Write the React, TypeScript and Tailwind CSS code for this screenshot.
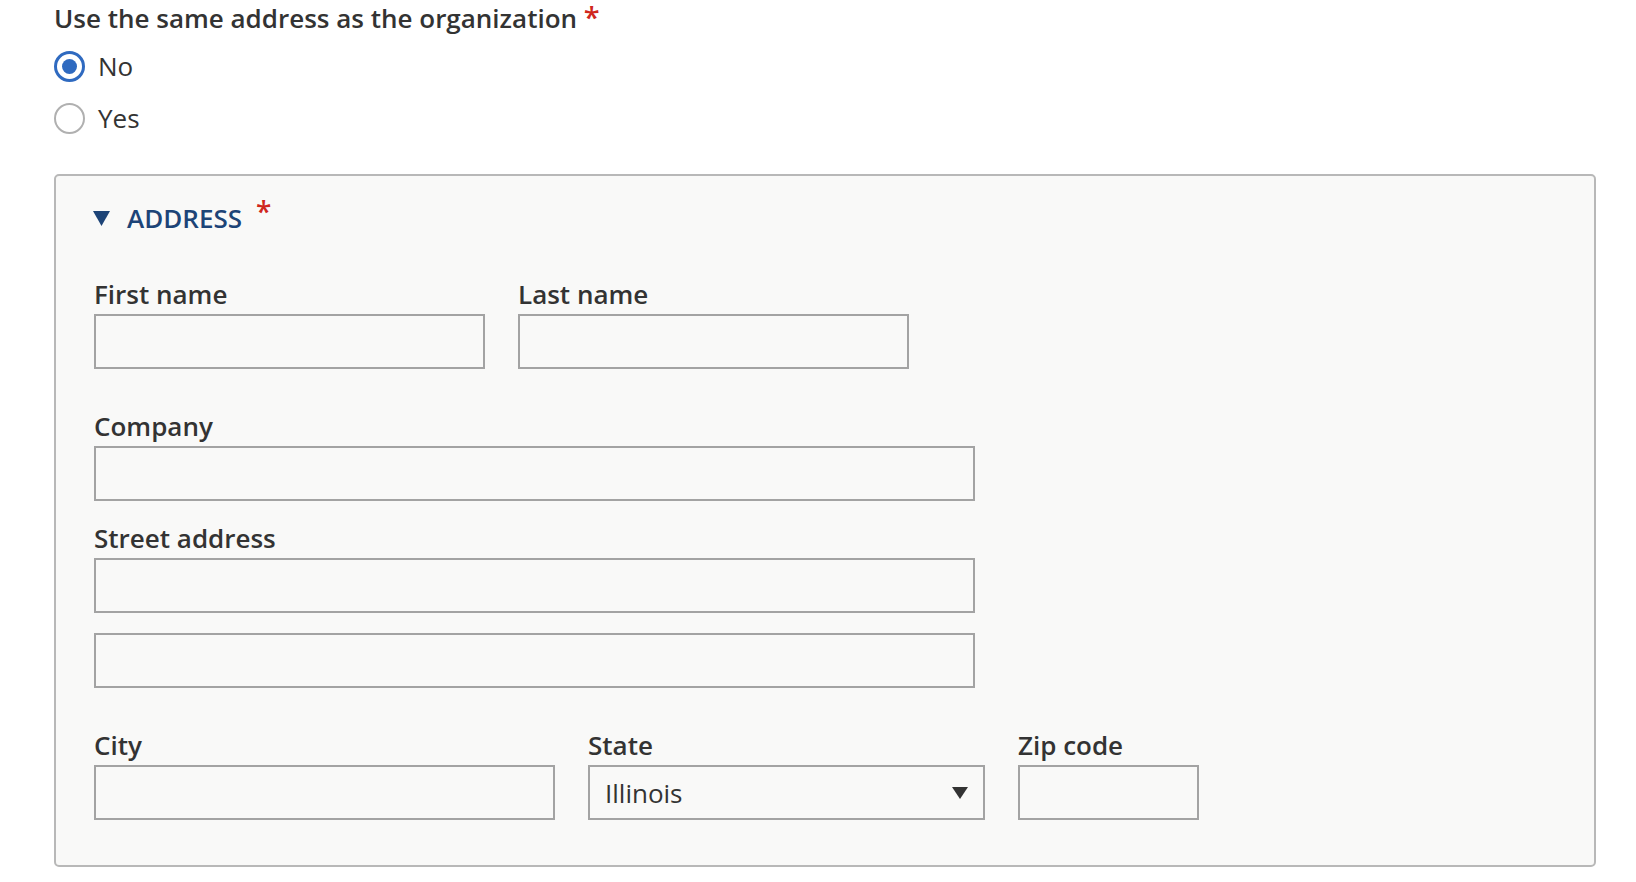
import React from 'react';

function Label({ children }: { children: React.ReactNode }) {
  return <div className="mb-[4px] text-[26px] font-semibold leading-[32px] text-[#333]">{children}</div>;
}

function Box({ className = '' }: { className?: string }) {
  return <div className={`h-[55px] border-2 border-[#a3a3a3] bg-transparent ${className}`} />;
}

function Radio({ label, checked }: { label: string; checked?: boolean }) {
  return (
    <div className="flex h-[52px] items-center gap-[13px]">
      {checked ? (
        <span className="flex h-[31px] w-[31px] items-center justify-center rounded-full border-[3px] border-[#2f6ac0]">
          <span className="h-[15px] w-[15px] rounded-full bg-[#2f6ac0]" />
        </span>
      ) : (
        <span className="h-[31px] w-[31px] rounded-full border-2 border-[#b0b0b0]" />
      )}
      <span className="text-[26px] leading-[32px] text-[#333]">{label}</span>
    </div>
  );
}

export default function App() {
  return (
    <div className="min-h-[882px] bg-white pl-[54px] pr-[40px] font-['Open_Sans',sans-serif] text-[#333]">
      {/* Question */}
      <div className="h-[36px] text-[26px] font-semibold leading-[36px]">
        Use the same address as the organization{' '}
        <span className="text-[29px] leading-none text-[#d0271d]">*</span>
      </div>
      <div className="mt-[4px]">
        <Radio label="No" checked />
        <Radio label="Yes" />
      </div>

      {/* Address panel */}
      <div className="mt-[30px] rounded-[5px] border-2 border-[#b8b8b8] bg-[#f9f9f8] pb-[45px] pl-[38px] pt-[24px]">
        <div className="flex items-center">
          <svg width="17" height="15" viewBox="0 0 17 15" className="-ml-[1px]">
            <path d="M0 0 H17 L8.5 15 Z" fill="#1d4477" />
          </svg>
          <span className="ml-[17px] text-[26px] font-semibold leading-[36px] text-[#1d4477]">ADDRESS</span>
          <span className="ml-[14px] -mt-[14px] text-[28px] font-semibold leading-[36px] text-[#d0271d]">*</span>
        </div>

        <div className="mt-[42px] flex gap-[33px]">
          <div className="w-[391px]">
            <Label>First name</Label>
            <Box />
          </div>
          <div className="w-[391px]">
            <Label>Last name</Label>
            <Box />
          </div>
        </div>

        <div className="mt-[41px] w-[881px]">
          <Label>Company</Label>
          <Box />
        </div>

        <div className="mt-[21px] w-[881px]">
          <Label>Street address</Label>
          <Box />
          <Box className="mt-[20px]" />
        </div>

        <div className="mt-[41px] flex gap-[33px]">
          <div className="w-[461px]">
            <Label>City</Label>
            <Box />
          </div>
          <div className="w-[397px]">
            <Label>State</Label>
            <div className="flex h-[55px] items-center justify-between border-2 border-[#a3a3a3] pl-[15px] pr-[15px]">
              <span className="text-[26px] leading-[32px] text-[#333]">Illinois</span>
              <svg width="16" height="12" viewBox="0 0 16 12">
                <path d="M0 0 H16 L8 12 Z" fill="#333" />
              </svg>
            </div>
          </div>
          <div className="w-[181px]">
            <Label>Zip code</Label>
            <Box />
          </div>
        </div>
      </div>
    </div>
  );
}
